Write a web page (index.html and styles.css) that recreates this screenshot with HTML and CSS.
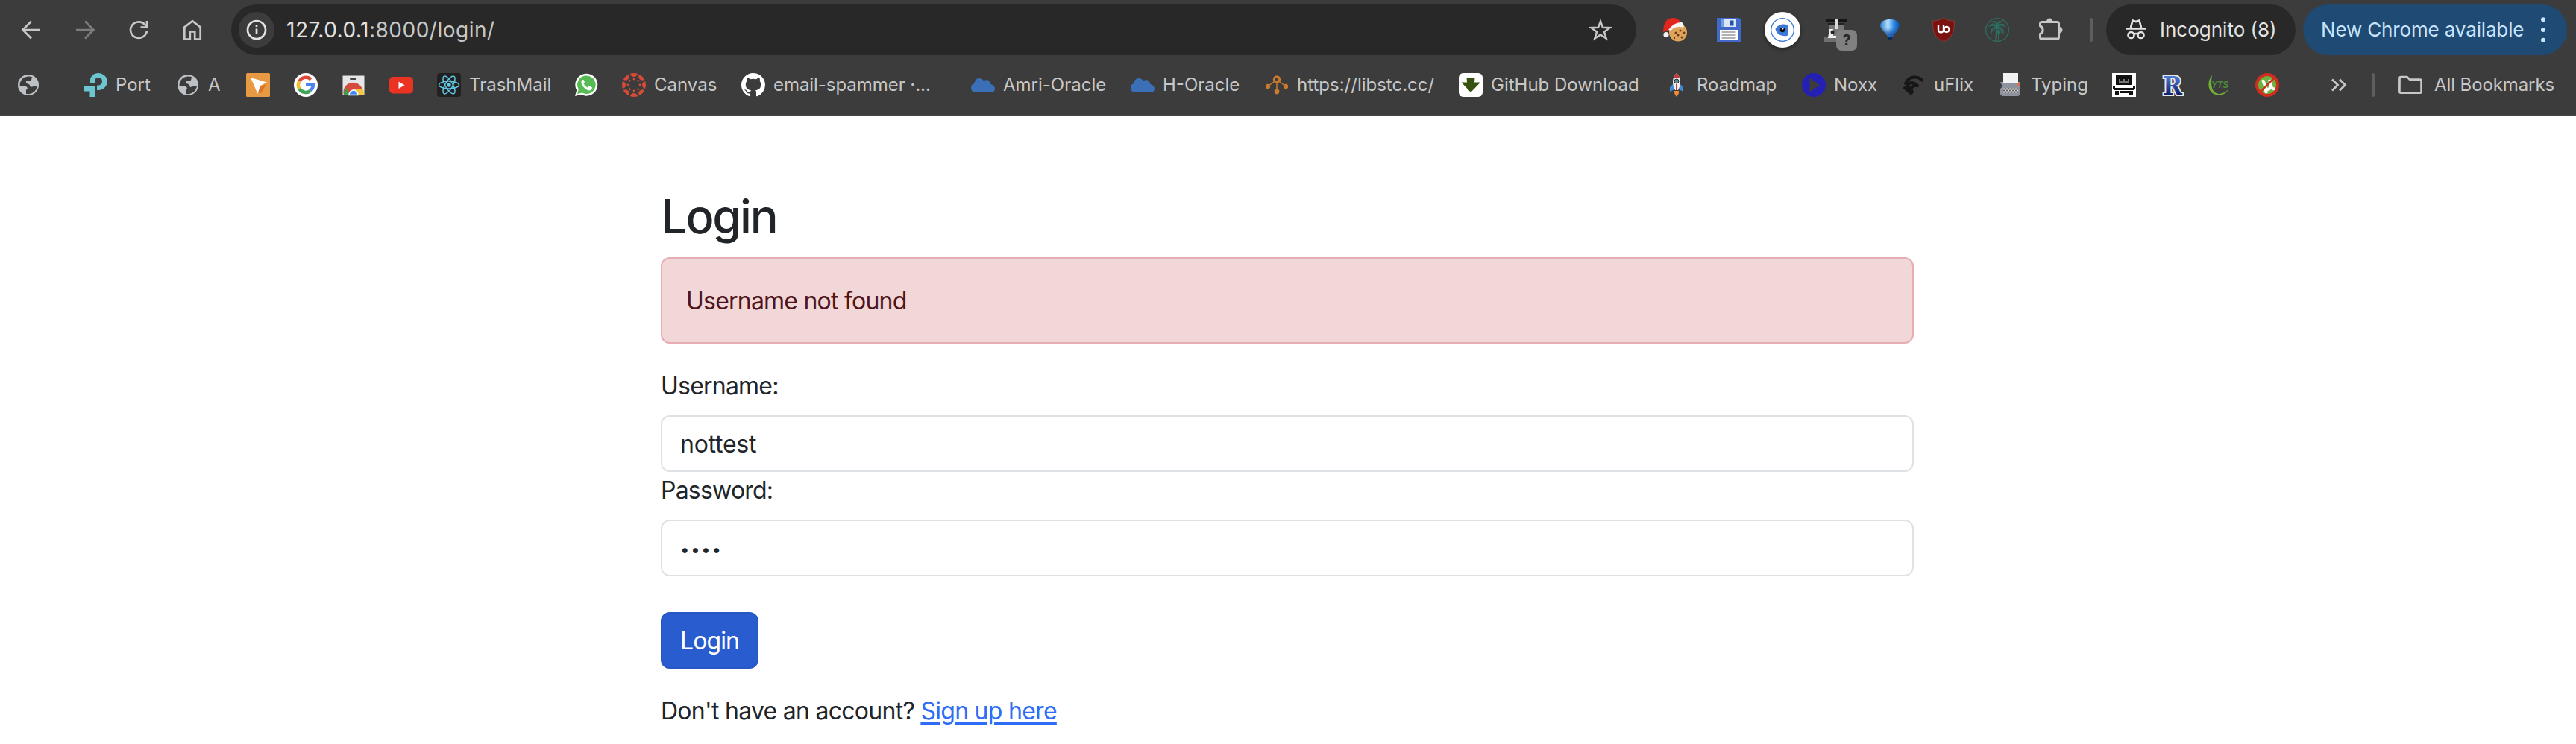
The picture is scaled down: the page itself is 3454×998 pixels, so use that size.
FILE: index.html
```html
<!DOCTYPE html>
<html lang="en">
<head>
<meta charset="utf-8">
<title>Login</title>
<link rel="stylesheet" href="styles.css">
</head>
<body>
<header class="chrome">
  <div class="toolbar">
    <nav class="nav">
      <svg class="ico" viewBox="0 0 32 32"><path d="M28 16H5M16 4.500 4.500 16 16 27.500" fill="none" stroke="#c7c7c7" stroke-width="2.700"/></svg>
      <svg class="ico" viewBox="0 0 32 32"><path d="M4 16H27M16 4.500 27.500 16 16 27.500" fill="none" stroke="#7c7c7c" stroke-width="2.700"/></svg>
      <svg class="ico" viewBox="0 0 32 32"><path d="M27 17A11 10.800 0 1 1 24.500 9.200L27 12M27 4v8.500h-8.500" fill="none" stroke="#c7c7c7" stroke-width="2.700"/></svg>
      <svg class="ico" viewBox="0 0 32 32"><path d="M5.300 28.500V12.300L16 4.200l10.700 8.100v16.200h-7.500V18.500h-6.400v10z" fill="none" stroke="#c7c7c7" stroke-width="2.700"/></svg>
    </nav>
    <div class="omnibox">
      <span class="site-info"><svg class="ico" viewBox="0 0 32 32"><circle cx="16" cy="16" r="12" fill="none" stroke="#e3e3e3" stroke-width="2.700"/><path d="M16 14.500V22M16 9v3" stroke="#e3e3e3" stroke-width="2.700"/></svg></span>
      <span class="url"><span class="host">127.0.0.1</span>:8000/login/</span>
      <svg class="star" viewBox="0 0 32 32"><path d="M16 4.500 19 12.800 28.500 13.200 21 18.800 23.700 27.600 16 22.400 8.300 27.600 11 18.800 3.500 13.200 13 12.800Z" fill="none" stroke="#c7c7c7" stroke-width="2.500"/></svg>
    </div>
    <div class="extensions">
      <svg class="ico" viewBox="0 0 32 32"><circle cx="20" cy="19.500" r="12" fill="#dfa35a"/><g fill="#6b3a1c"><circle cx="17" cy="20" r="1.500"/><circle cx="23" cy="17" r="1.500"/><circle cx="28" cy="20" r="1.500"/><circle cx="20" cy="23" r="1.500"/><circle cx="25" cy="26" r="1.500"/><circle cx="15" cy="27" r="1.200"/></g><path d="M0 19C0 5 6 0 13 0c7 0 10 4 11 8L6 17z" fill="#e0261d"/><path d="M7 16Q15 5 25 6q4 3 2 7-10-3-17 4z" fill="#f5f5f5"/><circle cx="4" cy="22.500" r="3.600" fill="#f2f2f2"/></svg>
      <svg class="ico" viewBox="0 0 32 32"><path d="M0 0h30l2 2v30H0z" fill="#4269c9"/><path d="M6 2h20v10H6z" fill="#dce6f7"/><path d="M6 2h4v10H6z" fill="#6fa0ea"/><path d="M18 3.500h4.500v7h-4.500z" fill="#2450a8"/><path d="M4 16h24v14H4z" fill="#fff"/><path d="M6.500 19h19M6.500 23h19M6.500 27h19" stroke="#999" stroke-width="1.600"/></svg>
      <span class="disc"><svg class="ico" viewBox="0 0 32 32"><circle cx="16" cy="16" r="15.300" fill="#fff" stroke="#3b78d8" stroke-width="1.300"/><path d="M6.500 15C9 9 17 7 23 9.500c1.500 5 1.500 10-.5 14.500C14 25 8 22 6.500 15Z" fill="#3b78d8"/><circle cx="16" cy="16" r="3.300" fill="#111"/><circle cx="16.500" cy="14.500" r="1" fill="#fff"/></svg></span>
      <span class="badged"><svg class="ico" viewBox="0 0 32 32"><path d="M2 1h28v4H2z" fill="#161616"/><path d="M5 7h22v2H5z" fill="#222"/><path d="M6 10h20v14H6z" fill="#777"/><path d="M14 1h4v14h-4z" fill="#dcdcdc"/><path d="M0 26h20v6H0z" fill="#6f6f6f"/><path d="M7 15h5v9h6v3H5z" fill="#eee"/><circle cx="11" cy="19" r="2.500" fill="#222"/></svg><span class="badge">?</span></span>
      <svg class="ico" viewBox="0 0 32 32"><defs><linearGradient id="bl"><stop offset="0" stop-color="#2b7fd6"/><stop offset=".4" stop-color="#b8e0fb"/><stop offset=".7" stop-color="#2f8be6"/><stop offset="1" stop-color="#0c4da8"/></linearGradient><linearGradient id="bs" x2="0" y2="1"><stop offset=".4" stop-color="#0d4ea3" stop-opacity="0"/><stop offset=".7" stop-color="#0d4ea3" stop-opacity=".8"/></linearGradient></defs><path d="M3 10C4 4 10 2 16 2s12 2 13 8c-1 6-7 11-10 16v4h-5v-4C11 20 4 16 3 10Z" fill="url(#bl)"/><path d="M3 10C4 4 10 2 16 2s12 2 13 8c-1 6-7 11-10 16v4h-5v-4C11 20 4 16 3 10Z" fill="url(#bs)"/><path d="M14 25h5v5h-5z" fill="#0b2b58"/></svg>
      <svg class="ico" viewBox="0 0 32 32"><path d="M16 0c4 3 9 4 14.500 4 0 14-2 22-14.500 28C3.500 26 1.500 18 1.500 4 7 4 12 3 16 0Z" fill="#7b120f" stroke="#a04a45" stroke-width=".6"/><path d="M9 10v6a3.500 3.500 0 0 0 7 0v-6" fill="none" stroke="#fff" stroke-width="2.400"/><circle cx="20" cy="15.500" r="3.500" fill="none" stroke="#fff" stroke-width="2.400"/></svg>
      <svg class="ico" viewBox="0 0 32 32"><g fill="none" stroke="#2c6f60" stroke-width="1.300"><circle cx="16" cy="16" r="15.400"/><path d="M13.500 31c1-6 1.500-10 1-18M18 31c0-6-.5-11-1-17"/><path d="M16 12C12 7 8 7 5.500 11q5.500-2 10.500 1C11 12 7 15 8 20q3-6 8-8c4 2 7 4 7.500 9 2-5-1.500-9-7.500-9 4-3 8-2.500 11 .5-2-5.500-7-5.500-11-.5 0-4 2-6 6-7-5-1.500-7 2-6 7-1-4-3-6-6-7 4-1.500 7 2 6 7"/><circle cx="18" cy="19" r="2"/></g></svg>
      <svg class="ico puzzle" viewBox="0 0 32 32"><path d="M3.500 5.500H24.500a2 2 0 0 1 2 2V26a2 2 0 0 1-2 2H3.500a2 2 0 0 1-2-2V21.500a5.600 5.600 0 0 0 0-10.500V7.500a2 2 0 0 1 2-2Z" fill="none" stroke="#c7c7c7" stroke-width="3" stroke-linejoin="round"/><path d="M10 5a4.200 4.500 0 0 1 8.400 0zM27 12a4.500 4.200 0 0 1 0 8.400z" fill="#c7c7c7"/></svg>
    </div>
    <span class="rule"></span>
    <div class="pill incognito">
      <svg class="ico" viewBox="0 0 32 32"><path d="M9 13 11.500 3.500 16 5l4.500-1.500L23 13M2 14.500h28" fill="none" stroke="#e3e3e3" stroke-width="2.700"/><circle cx="9.500" cy="23" r="4" fill="none" stroke="#e3e3e3" stroke-width="2.700"/><circle cx="22.500" cy="23" r="4" fill="none" stroke="#e3e3e3" stroke-width="2.700"/><path d="M13 22q3-2 6 0" fill="none" stroke="#e3e3e3" stroke-width="2.700"/></svg>
      <span class="pill-text">Incognito (8)</span>
    </div>
    <div class="pill update">
      <span class="pill-text">New Chrome available</span>
      <svg class="dots" viewBox="0 0 8 32"><g fill="#c9e3fb"><circle cx="4" cy="5" r="2.400"/><circle cx="4" cy="16" r="2.400"/><circle cx="4" cy="27" r="2.400"/></g></svg>
    </div>
  </div>

  <div class="bookmarks">
    <span class="bm lone-globe"><svg class="ico" viewBox="0 0 32 32"><circle cx="16" cy="16" r="14" fill="#bdc1c6"/><path d="M16 4.500C8 5 4.500 11 4.500 17L10 17.500q5 0 5 4l-2 1v5.500c8 1 13-3 15-10h-5l-4 1q-1-5-6-5v-3.500h4.500q3 0 3-3.500l1-1.500Q18 4 16 4.500Z" fill="#3c3c3c"/></svg></span>
    <span class="bm port"><svg class="ico" viewBox="0 0 32 32"><path d="M9 14V10C9 4 14 0 20 0s12 5 12 11-5 12-12 12h-2v-6.500h2c3 0 5-2.500 5-5.500s-2-5-5-5-5 2-5 5v3z" fill="#6cc5d0"/><path d="M0 17h15v15H8.500v-7.500H0z" fill="#6cc5d0"/></svg><span class="label">Port</span></span>
    <span class="bm a"><svg class="ico" viewBox="0 0 32 32"><circle cx="16" cy="16" r="14" fill="#bdc1c6"/><path d="M16 4.500C8 5 4.500 11 4.500 17L10 17.500q5 0 5 4l-2 1v5.500c8 1 13-3 15-10h-5l-4 1q-1-5-6-5v-3.500h4.500q3 0 3-3.500l1-1.500Q18 4 16 4.500Z" fill="#3c3c3c"/></svg><span class="label">A</span></span>
    <span class="bm"><svg class="ico" viewBox="0 0 32 32"><rect width="32" height="32" rx="1.500" fill="#e89a42"/><path d="M14 22 28 14 19 28z" fill="#dc7425"/><path d="M6 6 28 12.500 19 17 15.500 28z" fill="#fff"/></svg></span>
    <span class="bm"><svg class="ico" viewBox="0 0 32 32"><circle cx="16" cy="16" r="16" fill="#fff"/><g fill="none" stroke-width="4.500"><path d="M23 8.500A10 10 0 0 0 7.300 11" stroke="#e0463a"/><path d="M7.300 11a10 10 0 0 0 0 10" stroke="#f5bb29"/><path d="M7.300 21A10 10 0 0 0 22.500 23.500" stroke="#3fa558"/><path d="M22.500 23.500Q26 20 25.800 15.800H16" stroke="#4b84ee"/></g></svg></span>
    <span class="bm"><svg class="ico" viewBox="0 0 32 32"><path d="M1.500 3.500h29v26h-29z" fill="#e4e6e8"/><rect x="11" y="6" width="9" height="3" rx="1.500" fill="#444"/><path d="M3 29.500A13 13 0 0 1 28 22H16z" fill="#d64b3c"/><path d="M3 29.500Q3 25 6 20l6 9.500z" fill="#37a052"/><path d="M17 22h12q1 3 1 7.500H17z" fill="#f4c743"/><path d="M10 29.500a6 6.500 0 0 1 12 0z" fill="#4285f4" stroke="#fff" stroke-width="1.500"/></svg></span>
    <span class="bm"><svg class="ico" viewBox="0 0 32 32"><rect y="5" width="32" height="22.500" rx="5" fill="#ea3323"/><path d="M12.500 11.500v9.500l8-4.750z" fill="#fff"/></svg></span>
    <span class="bm trash"><svg class="ico" viewBox="0 0 32 32"><rect width="32" height="32" rx="4" fill="#212121"/><g fill="none" stroke="#61c7e3" stroke-width="1.500"><ellipse cx="16" cy="16" rx="13.500" ry="5"/><ellipse cx="16" cy="16" rx="13.500" ry="5" transform="rotate(60 16 16)"/><ellipse cx="16" cy="16" rx="13.500" ry="5" transform="rotate(120 16 16)"/></g><circle cx="16" cy="16" r="2.700" fill="#61c7e3"/></svg><span class="label">TrashMail</span></span>
    <span class="bm"><svg class="ico" viewBox="0 0 32 32"><path d="M1 31 3.200 23A15 15 0 1 1 9 28.800Z" fill="#fff"/><path d="M4 28 5.800 22A12.300 12.300 0 1 1 10.500 26.500Z" fill="#57bb54"/><path d="M11 9q-3 3-.5 7Q14 22 19.500 23.500q4 0 4.500-4l-4-2.200-2 2.200q-4-1.500-5.500-5.500l1.500-1.700L12.500 9z" fill="#fff"/></svg></span>
    <span class="bm canvas"><svg class="ico" viewBox="0 0 32 32"><defs><g id="petal"><path d="M11 .8Q16-.8 21 .8 20 5 16 5T11 .8Z"/><circle cx="16" cy="8" r="1.400"/></g></defs><g fill="#d64a38"><use href="#petal"/><use href="#petal" transform="rotate(45 16 16)"/><use href="#petal" transform="rotate(90 16 16)"/><use href="#petal" transform="rotate(135 16 16)"/><use href="#petal" transform="rotate(180 16 16)"/><use href="#petal" transform="rotate(225 16 16)"/><use href="#petal" transform="rotate(270 16 16)"/><use href="#petal" transform="rotate(315 16 16)"/></g></svg><span class="label">Canvas</span></span>
    <span class="bm email"><svg class="ico" viewBox="0 0 16 16"><path fill="#fff" d="M8 0C3.580 0 0 3.580 0 8c0 3.540 2.290 6.530 5.470 7.590.4.070.55-.17.55-.38 0-.19-.01-.82-.01-1.490-2.010.37-2.530-.49-2.690-.94-.09-.23-.48-.94-.82-1.130-.28-.15-.68-.52-.01-.53.63-.01 1.080.58 1.230.82.72 1.210 1.870.87 2.330.66.07-.52.28-.87.51-1.070-1.780-.2-3.640-.89-3.640-3.950 0-.87.31-1.590.82-2.150-.08-.2-.36-1.020.08-2.120 0 0 .67-.21 2.200.82.64-.18 1.320-.27 2-.27s1.360.09 2 .27c1.530-1.040 2.200-.82 2.200-.82.44 1.100.16 1.920.08 2.120.51.56.82 1.270.82 2.150 0 3.070-1.870 3.750-3.650 3.950.29.25.54.73.54 1.480 0 1.070-.01 1.930-.01 2.200 0 .21.15.46.55.38A8.010 8.010 0 0 0 16 8c0-4.420-3.580-8-8-8z"/></svg><span class="label">email-spammer ·...</span></span>
    <span class="bm amri"><svg class="ico" viewBox="0 0 32 32"><path d="M6 26Q0 25.500 0 20q0-5 4.500-6Q5 7 11 7q4 0 6 3.500 7-4 9.500 4.500 5.500 1.500 5.500 6t-5 5z" fill="#3b6fb8"/></svg><span class="label">Amri-Oracle</span></span>
    <span class="bm horacle"><svg class="ico" viewBox="0 0 32 32"><path d="M6 26Q0 25.500 0 20q0-5 4.500-6Q5 7 11 7q4 0 6 3.500 7-4 9.500 4.500 5.500 1.500 5.500 6t-5 5z" fill="#3b6fb8"/></svg><span class="label">H-Oracle</span></span>
    <span class="bm lib"><svg class="ico" viewBox="0 0 32 32"><g fill="none" stroke="#c97a2c" stroke-width="1.500"><path d="M16 13v12M13 11 4 18M19 11l9 7"/></g><circle cx="16" cy="8.500" r="3.700" fill="none" stroke="#c97a2c" stroke-width="3"/><g fill="#c97a2c"><circle cx="4" cy="18" r="3.200"/><circle cx="28" cy="18" r="3.200"/><circle cx="16" cy="25" r="3.400"/></g></svg><span class="label">https://libstc.cc/</span></span>
    <span class="bm ghd"><svg class="ico" viewBox="0 0 32 32"><rect width="32" height="32" rx="6" fill="#fff"/><path d="M10.500 6q2 1.500 5.500 0 3.500 1.500 5.500 0l-.5 6.500h8L16 26 3.500 12.500H11z" fill="#35520f"/></svg><span class="label">GitHub Download</span></span>
    <span class="bm road"><svg class="ico" viewBox="0 0 32 32"><path d="M12 14 7 19v6l6-3zM20 14l5 5v6l-6-3z" fill="#3f8bd6"/><path d="M16 0q5 5 5 12 0 6-3 11h-4q-3-5-3-11 0-7 5-12z" fill="#f0f0f0"/><path d="M16 0q3 3 4 6h-8q1-3 4-6zM15 15h2v8h-2z" fill="#c63b35"/><circle cx="16" cy="11" r="3" fill="#5b8793" stroke="#333"/><path d="M13 24h6q1 3-3 8-4-5-3-8z" fill="#ee8b3a"/></svg><span class="label">Roadmap</span></span>
    <span class="bm noxx"><svg class="ico" viewBox="0 0 32 32"><circle cx="16" cy="16" r="16" fill="#2420b5"/><path d="M10.500 6.500v19L24 16z" fill="#3c3c3c"/></svg><span class="label">Noxx</span></span>
    <span class="bm uflix"><svg class="ico" viewBox="0 0 32 32"><g fill="none" stroke="#161616" stroke-width="4" stroke-linecap="round" stroke-linejoin="round"><path d="M5 14Q9 5 18 5.500q5 0 9 4"/><path d="M4 20l8 7q3-1 1-4l-5-5q0-5 6-5 4 1 7 4"/><path d="M14 19q2-3 6-2"/></g></svg><span class="label">uFlix</span></span>
    <span class="bm typing"><svg class="ico" viewBox="0 0 32 32"><path d="M6 0h20v14H6z" fill="#f2f2f2"/><path d="M2 12h4v2h20v-2h2v8l1 9-3 2H5l-3-2V21l3-3z" fill="#8d929e"/><path d="M25 14h4v4h-3z" fill="#e36b42"/><path d="M6 20.500h20v6H6z" fill="#555"/><path d="M6 21.500h20M6 25.500h20" stroke="#eee" stroke-width="2" stroke-dasharray="2 2"/><path d="M8 23.500h18" stroke="#eee" stroke-width="2" stroke-dasharray="2 2"/></svg><span class="label">Typing</span></span>
    <span class="bm"><svg class="ico" viewBox="0 0 32 32"><path d="M0 0h32v32H0z" fill="#fff"/><path d="M5 3h22v13H5zM1 18h3v3H1zM28 18h3v3h-3zM3 20h26v3H3zM4 24h5v5H4zM23 24h5v5h-5zM10 24h12v3H10z" fill="#111"/><path d="M9 8h14v5H9z" fill="#777"/><path d="M11 8h4v3h-4zM17 8h4v3h-4z" fill="#111"/></svg></span>
    <span class="bm"><svg class="ico" viewBox="0 0 32 32"><defs><linearGradient id="rg" x2="0" y2="1"><stop offset=".15" stop-color="#5580dd"/><stop offset=".85" stop-color="#0b1c66"/></linearGradient></defs><text class="r-glyph" x="4" y="28.500" textLength="26" lengthAdjust="spacingAndGlyphs" fill="url(#rg)">R</text></svg></span>
    <span class="bm"><svg class="ico" viewBox="0 0 32 32"><path d="M6 3C-2 12 0 31 17 29.500q8-1 11-8Q23 28 15 28 2 26 6 3Z" fill="#74ae3a"/><text class="yts-glyph" x="5" y="20">YTS</text></svg></span>
    <span class="bm"><svg class="ico" viewBox="0 0 32 32"><circle cx="16" cy="16" r="14" fill="#6db33f"/><path d="M10 9l4 11q2 3 5 1t2-5l-2-7M13 19l2 8M21 17q1 5 5 4" fill="none" stroke="#fff" stroke-width="4"/><path d="M26 6 6 26" stroke="#d12c20" stroke-width="2.500"/><circle cx="16" cy="16" r="14" fill="none" stroke="#d12c20" stroke-width="4"/></svg></span>
    <span class="overflow"><svg class="ico" viewBox="0 0 32 32"><path d="M7 8.500 14.500 16 7 23.500M17 8.500 24.500 16 17 23.500" fill="none" stroke="#c7c7c7" stroke-width="2.700"/></svg></span>
    <span class="rule"></span>
    <span class="bm all"><svg class="ico" viewBox="0 0 32 32"><path d="M1.500 6.500q0-1.500 1.500-1.500h8.500L15 8.700h14q1.600 0 1.600 1.600V25q0 1.600-1.600 1.600H3q-1.600 0-1.600-1.600z" fill="none" stroke="#c7c7c7" stroke-width="2.700"/></svg><span class="label">All Bookmarks</span></span>
  </div>
</header>

<main class="container">
  <h1 class="title">Login</h1>
  <div class="alert">Username not found</div>
  <form class="form">
    <label class="field-label" for="u">Username:</label>
    <input class="field" id="u" type="text" value="nottest">
    <label class="field-label" for="p">Password:</label>
    <input class="field secret" id="p" type="password" value="test">
    <button class="btn" type="button">Login</button>
  </form>
  <p class="signup"><span class="ask">Don't have an account?</span> <a class="link" href="#">Sign up here</a></p>
</main>
</body>
</html>
```

FILE: styles.css
```css
* { box-sizing: border-box; }
body { margin: 0; background: #fff; color: #212529; font-family: Inter, "Liberation Sans", sans-serif; font-size: 32px; line-height: 48px; }
svg { display: block; flex: none; overflow: visible; }
.ico { width: 32px; height: 32px; }

.chrome { height: 156px; background: #3c3c3c; border-bottom: 2px solid #484445; color: #c7c7c7; }
.toolbar { display: flex; align-items: center; height: 80px; padding: 0 12px 0 26px; }
.nav { display: flex; gap: 40px; width: 284px; }
.omnibox { display: flex; align-items: center; width: 1884px; height: 68px; padding: 0 32px 0 10px; border-radius: 34px; background: #282828; }
.site-info { display: flex; align-items: center; justify-content: center; width: 48px; height: 48px; border-radius: 50%; background: #3c3c3c; }
.url { flex: 1; margin-left: 16px; font-size: 28px; letter-spacing: .5px; }
.host { color: #e3e3e3; }
.star { width: 32px; height: 32px; }
.extensions { display: flex; align-items: center; gap: 40px; margin-left: 36px; }
.disc { display: flex; align-items: center; justify-content: center; width: 48px; height: 48px; margin: 0 -8px; border-radius: 50%; background: #fff; box-shadow: 0 2px 5px rgba(0,0,0,.5); }
.badged { position: relative; }
.badge { position: absolute; left: 16px; top: 16px; width: 28px; height: 28px; border-radius: 7px; background: #808080; color: #282828; font-size: 20px; line-height: 28px; font-weight: 700; text-align: center; }
.rule { width: 4px; height: 32px; border-radius: 2px; background: #5e5e5e; flex: none; }
.toolbar .rule { margin-left: 36px; }
.pill { display: flex; align-items: center; height: 68px; border-radius: 34px; font-size: 26px; white-space: nowrap; }
.incognito { width: 254px; margin-left: 18px; padding-left: 24px; background: #282828; color: #e3e3e3; }
.incognito .pill-text { margin-left: 16px; }
.update { width: 354px; margin-left: 10px; padding: 0 27px 0 24px; justify-content: space-between; background: #1f4a73; color: #c9e3fb; letter-spacing: -.15px; }
.dots { width: 10px; height: 40px; }

.bookmarks { display: flex; align-items: center; height: 68px; padding-left: 22px; font-size: 24px; }
.bm { display: flex; align-items: center; flex: none; width: 64px; white-space: nowrap; }
.label { margin-left: 11px; }
.lone-globe { width: 90px; }
.port { width: 124px; }
.a { width: 94px; }
.trash { width: 184px; }
.canvas { width: 160px; }
.email { width: 308px; letter-spacing: -.05px; }
.amri { width: 214px; }
.horacle { width: 180px; }
.lib { width: 260px; }
.ghd { width: 276px; }
.road { width: 184px; }
.noxx { width: 134px; }
.uflix { width: 130px; }
.typing { width: 152px; }
.r-glyph { font: 700 34px "DejaVu Serif", serif; stroke: #e8e8e8; stroke-width: 4px; paint-order: stroke; }
.yts-glyph { font: italic 700 12px "Liberation Sans", sans-serif; fill: #4d8a3d; }
.overflow { width: 60px; margin-left: 32px; }
.all { width: auto; margin-left: 32px; letter-spacing: -.1px; }
.all .label { margin-left: 16px; }

.container { display: flex; flex-direction: column; width: 1680px; margin: 0 auto; padding-top: 96px; position: relative; left: -1px; letter-spacing: -.78px; }
.title { margin: 0 0 16px; font-size: 63px; line-height: 77px; font-weight: 550; letter-spacing: -2.2px; }
.alert { height: 116px; padding: 33px 32px 31px; border: 2px solid #e6adb3; border-radius: 12px; background: #f2d7d9; color: #50151c; }
.form { display: flex; flex-direction: column; align-items: flex-start; margin-top: 32px; }
.field-label { padding-top: 1px; margin-bottom: 15px; }
.field { width: 100%; height: 76px; padding: 12px 24px; border: 2px solid #dee2e6; border-radius: 12px; background: #fff; color: #212529; font: inherit; letter-spacing: -.25px; }
.secret { padding-top: 14px; padding-bottom: 10px; font-size: 22px; letter-spacing: 1.8px; }
.btn { width: 131px; height: 76px; margin-top: 48px; padding: 2px 0 0; border: 2px solid #2657c4; border-radius: 12px; background: #295cce; color: #fff; font: inherit; letter-spacing: -.9px; }
.signup { margin: 33px 0 0; letter-spacing: -.72px; }
.link { color: #2f6df6; text-decoration: underline; text-decoration-thickness: 3px; text-underline-offset: 4px; }
```
